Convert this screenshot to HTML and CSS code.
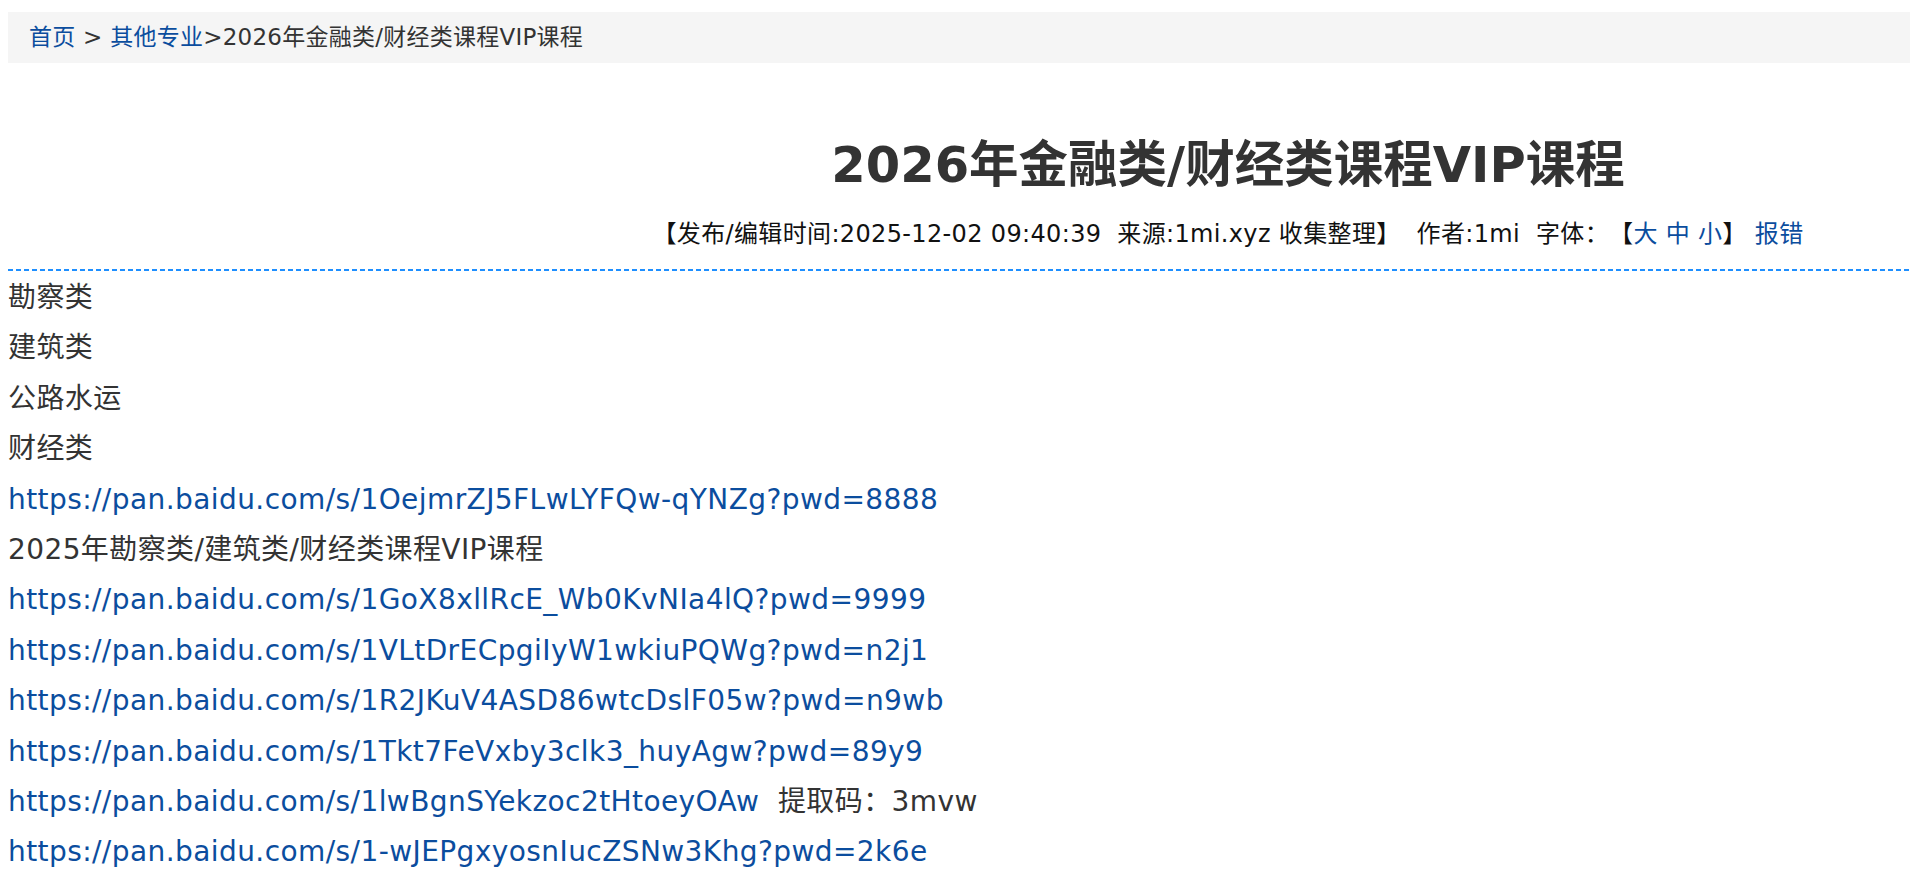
FILE: index.html
```html
<!DOCTYPE html>
<html lang="zh-CN">
<head>
<meta charset="utf-8">
<title>2026年金融类/财经类课程VIP课程</title>
<link rel="stylesheet" href="styles.css">
</head>
<body>
<div class="page">
  <div class="crumbs"><a href="#">首页</a> &gt; <a href="#">其他专业</a>&gt;2026年金融类/财经类课程VIP课程</div>
  <div class="article">
    <h1 class="title">2026年金融类/财经类课程VIP课程</h1>
    <div class="meta">【发布/编辑时间:2025-12-02 09:40:39&nbsp;&nbsp;来源:1mi.xyz 收集整理】&nbsp;&nbsp;作者:1mi&nbsp;&nbsp;字体：【<a href="#">大</a> <a href="#">中</a> <a href="#">小</a>】&nbsp;<a href="#">报错</a></div>
    <div class="rule"></div>
    <div class="content">
      <p>勘察类</p>
      <p>建筑类</p>
      <p>公路水运</p>
      <p>财经类</p>
      <p><a href="#">https://pan.baidu.com/s/1OejmrZJ5FLwLYFQw-qYNZg?pwd=8888</a></p>
      <p>2025年勘察类/建筑类/财经类课程VIP课程</p>
      <p><a href="#">https://pan.baidu.com/s/1GoX8xllRcE_Wb0KvNIa4lQ?pwd=9999</a></p>
      <p><a href="#">https://pan.baidu.com/s/1VLtDrECpgiIyW1wkiuPQWg?pwd=n2j1</a></p>
      <p><a href="#">https://pan.baidu.com/s/1R2JKuV4ASD86wtcDslF05w?pwd=n9wb</a></p>
      <p><a href="#">https://pan.baidu.com/s/1Tkt7FeVxby3clk3_huyAgw?pwd=89y9</a></p>
      <p><a href="#">https://pan.baidu.com/s/1lwBgnSYekzoc2tHtoeyOAw</a>&nbsp;&nbsp;提取码：3mvw</p>
      <p><a href="#">https://pan.baidu.com/s/1-wJEPgxyosnIucZSNw3Khg?pwd=2k6e</a></p>
    </div>
  </div>
</div>
</body>
</html>
```

FILE: styles.css
```css
html {
  overflow-x: hidden;
}
body {
  margin: 0;
  font-family: "DejaVu Sans", "Noto Sans CJK SC", sans-serif;
  color: #333;
  background: #fff;
  text-spacing-trim: space-all;
}
a {
  color: #0b4d9e;
  text-decoration: none;
}
.page {
  width: 2440px;
  margin-left: 8px;
  padding-top: 12px;
}
.crumbs {
  background: #f5f5f5;
  height: 51px;
  line-height: 51px;
  padding-left: 21px;
  font-size: 23px;
  letter-spacing: 0.25px;
  color: #333;
}
.title {
  margin: 72px 0 0;
  font-size: 49.5px;
  line-height: 60px;
  font-weight: bold;
  text-align: center;
  color: #333;
}
.meta {
  margin-top: 24px;
  font-size: 24px;
  line-height: 30px;
  text-align: center;
  color: #111;
  letter-spacing: 0.35px;
}
.rule {
  margin-top: 20px;
  height: 2px;
  background: repeating-linear-gradient(90deg, #1e8fff 0 5px, transparent 5px 8px);
}
.content {
  padding-top: 2px;
  font-size: 28px;
  line-height: 50.4px;
}
.content p {
  margin: 0;
  letter-spacing: 0.4px;
}
.content a {
  letter-spacing: 0.42px;
}
```
